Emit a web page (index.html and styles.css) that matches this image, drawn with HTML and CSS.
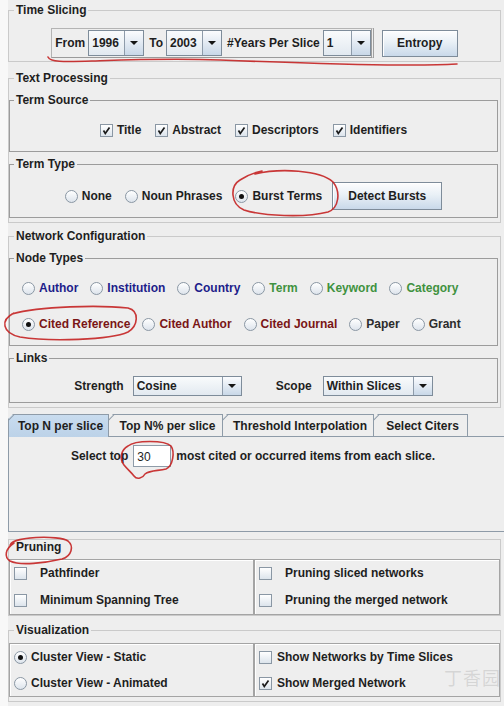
FILE: index.html
```html
<!DOCTYPE html>
<html lang="en">
<head>
<meta charset="utf-8">
<title>Settings</title>
<link rel="stylesheet" href="styles.css">
</head>
<body>
<div class="app">
  <fieldset class="outer ts">
    <legend>Time Slicing</legend>
    <div class="ts-row">
      <div class="toolbar">
        <span class="lbl">From</span>
        <div class="combo c-year"><span class="val">1996</span><span class="arr"><svg width="8" height="4" viewBox="0 0 8 4"><path d="M0 0H8L4 4Z"/></svg></span></div>
        <span class="lbl">To</span>
        <div class="combo c-year"><span class="val">2003</span><span class="arr"><svg width="8" height="4" viewBox="0 0 8 4"><path d="M0 0H8L4 4Z"/></svg></span></div>
        <span class="lbl">#Years Per Slice</span>
        <div class="combo c-per"><span class="val">1</span><span class="arr"><svg width="8" height="4" viewBox="0 0 8 4"><path d="M0 0H8L4 4Z"/></svg></span></div>
      </div>
      <div class="btn b-entropy">Entropy</div>
    </div>
  </fieldset>

  <fieldset class="outer tp">
    <legend>Text Processing</legend>
    <fieldset class="inner src">
      <legend>Term Source</legend>
      <div class="row center src-row">
        <span class="item"><span class="cb"><svg width="11" height="11" viewBox="0 0 11 11"><path d="M2.5 5.5 L4.3 8.5 L8.5 2.5"/></svg></span>Title</span>
        <span class="item"><span class="cb"><svg width="11" height="11" viewBox="0 0 11 11"><path d="M2.5 5.5 L4.3 8.5 L8.5 2.5"/></svg></span>Abstract</span>
        <span class="item"><span class="cb"><svg width="11" height="11" viewBox="0 0 11 11"><path d="M2.5 5.5 L4.3 8.5 L8.5 2.5"/></svg></span>Descriptors</span>
        <span class="item"><span class="cb"><svg width="11" height="11" viewBox="0 0 11 11"><path d="M2.5 5.5 L4.3 8.5 L8.5 2.5"/></svg></span>Identifiers</span>
      </div>
    </fieldset>
    <fieldset class="inner ttype">
      <legend>Term Type</legend>
      <div class="row center ttype-row">
        <span class="item"><span class="rb"></span>None</span>
        <span class="item"><span class="rb"></span>Noun Phrases</span>
        <span class="item"><span class="rb on"></span>Burst Terms</span>
        <div class="btn b-detect">Detect Bursts</div>
      </div>
    </fieldset>
  </fieldset>

  <fieldset class="outer nc">
    <legend>Network Configuration</legend>
    <fieldset class="inner nodes">
      <legend>Node Types</legend>
      <div class="row nrow">
        <span class="item blue"><span class="rb"></span>Author</span>
        <span class="item blue"><span class="rb"></span>Institution</span>
        <span class="item blue"><span class="rb"></span>Country</span>
        <span class="item green"><span class="rb"></span>Term</span>
        <span class="item green"><span class="rb"></span>Keyword</span>
        <span class="item green"><span class="rb"></span>Category</span>
      </div>
      <div class="row nrow">
        <span class="item red"><span class="rb on"></span>Cited Reference</span>
        <span class="item red"><span class="rb"></span>Cited Author</span>
        <span class="item red"><span class="rb"></span>Cited Journal</span>
        <span class="item gray"><span class="rb"></span>Paper</span>
        <span class="item gray"><span class="rb"></span>Grant</span>
      </div>
    </fieldset>
    <fieldset class="inner links">
      <legend>Links</legend>
      <div class="row center links-row">
        <span class="lbl l-strength">Strength</span>
        <div class="combo c-strength"><span class="val">Cosine</span><span class="arr"><svg width="8" height="4" viewBox="0 0 8 4"><path d="M0 0H8L4 4Z"/></svg></span></div>
        <span class="lbl l-scope">Scope</span>
        <div class="combo c-scope"><span class="val">Within Slices</span><span class="arr"><svg width="8" height="4" viewBox="0 0 8 4"><path d="M0 0H8L4 4Z"/></svg></span></div>
      </div>
    </fieldset>
  </fieldset>

  <div class="tabpane">
    <div class="tabs">
      <div class="tab sel t1">Top N per slice</div>
      <div class="tab t2">Top N% per slice</div>
      <div class="tab t3">Threshold Interpolation</div>
      <div class="tab t4">Select Citers</div>
    </div>
    <div class="tabbody">
      <span>Select top</span>
      <span class="field">30</span>
      <span>most cited or occurred items from each slice.</span>
    </div>
  </div>

  <div class="pruning">
    <div class="ptitle">Pruning</div>
    <div class="split">
      <div class="cell">
        <div class="prow"><span class="cb"></span><span class="ptext">Pathfinder</span></div>
        <div class="prow"><span class="cb"></span><span class="ptext">Minimum Spanning Tree</span></div>
      </div>
      <div class="cell">
        <div class="prow"><span class="cb"></span><span class="ptext">Pruning sliced networks</span></div>
        <div class="prow"><span class="cb"></span><span class="ptext">Pruning the merged network</span></div>
      </div>
    </div>
  </div>

  <fieldset class="outer vis">
    <legend>Visualization</legend>
    <div class="split vsplit">
      <div class="cell">
        <div class="vrow"><span class="rb on"></span>Cluster View - Static</div>
        <div class="vrow"><span class="rb"></span>Cluster View - Animated</div>
      </div>
      <div class="cell">
        <div class="vrow"><span class="cb"></span>Show Networks by Time Slices</div>
        <div class="vrow"><span class="cb"><svg width="11" height="11" viewBox="0 0 11 11"><path d="M2.5 5.5 L4.3 8.5 L8.5 2.5"/></svg></span>Show Merged Network</div>
      </div>
    </div>
  </fieldset>
</div>

<div class="wm">丁香园</div>

<svg class="ink" width="504" height="706" viewBox="0 0 504 706">
  <path d="M48 57 C50 62, 62 62, 92 61 S170 58, 220 60 S350 65, 400 65 S450 64, 457 64"/>
  <path d="M255 174 C280 168, 320 170, 333 182 C341 192, 339 208, 328 212 C305 218, 262 216, 244 210 C230 204, 230 186, 240 180 C246 176, 252 173, 262 171"/>
  <path d="M12 314 C40 306, 100 305, 128 308 C140 311, 138 326, 128 332 C110 340, 50 342, 20 337 C2 333, 0 320, 14 313"/>
  <path d="M128 446 C135 440, 165 440, 171 446 C175 452, 173 466, 166 469 C158 471, 150 470, 145 474 C143 478, 137 480, 134 476 C131 472, 128 470, 124 465 C119 458, 121 450, 128 446"/>
  <path d="M10 546 C10 536, 60 535, 68 541 C74 546, 72 556, 62 559 C45 563, 20 566, 10 561 C4 557, 5 549, 14 543"/>
</svg>
</body>
</html>
```

FILE: styles.css
```css
* { box-sizing: border-box; }

html, body {
  margin: 0;
  padding: 0;
  overflow: hidden;
}

body {
  position: relative;
  width: 504px;
  height: 706px;
  background: #f8f8f8;
  font: bold 12px/14px "Liberation Sans", Arial, sans-serif;
  color: #1e1e1e;
}

.app {
  margin-left: 8px;
  width: 496px;
  height: 706px;
  background: #eeeeee;
  padding-top: 3px;
}

fieldset {
  margin: 0;
  padding: 0;
  min-width: 0;
}

legend {
  padding: 0 2px;
  line-height: 14px;
}

.outer {
  width: 493px;
  border: 1px solid #cacaca;
}
.outer > legend { margin-left: 5px; }

.inner {
  margin-right: 2px;
  border: 1px solid #9c9c9c;
}
.inner > legend { margin-left: 4px; }

.row { display: flex; align-items: center; }
.center { justify-content: center; }

.item {
  display: flex;
  align-items: center;
  gap: 4px;
  height: 20px;
}

/* radio & checkbox */
.rb {
  position: relative;
  flex: none;
  width: 13px;
  height: 13px;
  border-radius: 50%;
  border: 1px solid #8a97a4;
  background: linear-gradient(#ffffff, #dde4ec);
}
.rb.on::after {
  content: "";
  position: absolute;
  left: 3px;
  top: 3px;
  width: 5px;
  height: 5px;
  border-radius: 50%;
  background: #111;
}
.cb {
  flex: none;
  width: 13px;
  height: 13px;
  border: 1px solid #8a97a4;
  background: linear-gradient(#ffffff, #dce4ec);
  display: flex;
}
.cb svg path {
  fill: none;
  stroke: #1a1a1a;
  stroke-width: 1.7;
}

/* combo + button */
.combo {
  flex: none;
  display: flex;
  border: 1px solid #7e8c9a;
  background: linear-gradient(#f9fbfc, #e2e9f0);
}
.combo .val {
  flex: 1;
  display: flex;
  align-items: center;
  padding-left: 3px;
}
.combo .arr {
  width: 19px;
  border-left: 1px solid #8e9baa;
  display: flex;
  align-items: center;
  justify-content: center;
  background: linear-gradient(#fbfcfe, #c9d8e8);
}
.combo .arr svg path { fill: #151515; }

.btn {
  flex: none;
  display: flex;
  align-items: center;
  justify-content: center;
  border: 1px solid #7e8c9a;
  background: linear-gradient(#fdfdfe 0%, #e9f0f6 45%, #c9d9ea 100%);
  box-shadow: inset 1px 1px 0 #ffffff;
}

/* time slicing */
.ts-row {
  display: flex;
  justify-content: center;
  align-items: center;
  gap: 8px;
  padding: 11px 0 3px;
}
.toolbar {
  display: flex;
  align-items: center;
  height: 30px;
  padding-left: 3px;
  border: 1px solid #b4b4b4;
  border-bottom-color: #9a9a9a;
  border-right: 3px double #a0a0a0;
}
.toolbar .lbl { margin-right: 3px; }
.toolbar .combo { height: 26px; margin-right: 5px; }
.toolbar .combo:last-child { margin-right: 0; }
.c-year { width: 56px; }
.c-per { width: 48px; }
.b-entropy { width: 76px; height: 27px; }

/* text processing */
.tp { margin-top: 9px; padding-bottom: 4px; }
.src { margin-top: 8px; }
.src-row { gap: 14px; padding: 13px 0 11px; }
.ttype { margin-top: 5px; }
.ttype-row { gap: 13px; padding: 11px 0 7px; }
.b-detect { width: 110px; height: 28px; margin-left: -3px; }

/* network configuration */
.nc { margin-top: 6px; padding-bottom: 4px; }
.nodes { margin-top: 8px; padding: 13px 0 11px 0; }
.nrow { gap: 12px; padding-left: 12px; }
.nrow + .nrow { margin-top: 16px; }
.blue { color: #1d1d8a; }
.green { color: #3f923f; }
.red { color: #7a1515; }
.gray { color: #2c2c2c; }

.links { margin-top: 5px; }
.links-row { padding: 11px 0 6px; }
.links-row .combo { height: 20px; }
.l-strength { margin-right: 9px; }
.c-strength { width: 109px; }
.l-scope { margin-left: 34px; margin-right: 11px; }
.c-scope { width: 110px; }

/* tabs */
.tabpane { margin-top: 6px; width: 496px; }
.tabs { display: flex; height: 22px; }
.tab {
  position: relative;
  height: 22px;
  margin-right: -1px;
  padding-left: 4px;
  display: flex;
  align-items: center;
  justify-content: center;
  border: 1px solid #8e9ba8;
  border-bottom: none;
  clip-path: polygon(5px 0, 100% 0, 100% 100%, 0 100%, 0 5px);
}
.tab::before {
  content: "";
  position: absolute;
  left: -1px;
  top: 5px;
  width: 9px;
  height: 1px;
  background: #8e9ba8;
  transform-origin: 0 0;
  transform: rotate(-45deg);
}
.tab.sel {
  z-index: 2;
  height: 23px;
  margin-bottom: -1px;
  background: linear-gradient(#c9dcef, #bcd2e8);
}
.t1 { width: 101px; }
.t2 { width: 115px; }
.t3 { width: 152px; }
.t4 { width: 95px; }

.tabbody {
  height: 96px;
  border: 1px solid #8e9ba8;
  border-right: none;
  padding: 8px 7px 0 0;
  display: flex;
  justify-content: center;
  align-items: flex-start;
  gap: 5px;
}
.tabbody > span { line-height: 22px; }
.tabbody .field {
  width: 38px;
  height: 22px;
  padding-left: 3px;
  border: 1px solid #8e9ba8;
  background: #ffffff;
  font-weight: normal;
}

/* pruning */
.pruning {
  margin-top: 7px;
  width: 493px;
  border: 1px solid #cacaca;
}
.ptitle {
  height: 19px;
  padding-left: 7px;
}
.split {
  display: grid;
  grid-template-columns: 245px 1fr;
}
.cell {
  border: 1px solid #a4a4a4;
  box-shadow: inset 1px 1px 0 #ffffff;
  padding: 3px 0 4px 4px;
}
.prow {
  display: flex;
  align-items: center;
  gap: 13px;
  height: 20px;
}
.prow + .prow { margin-top: 7px; }

/* visualization */
.vis { margin-top: 7px; padding-bottom: 4px; }
.vsplit { margin-top: 6px; }
.vsplit .cell { padding: 3px 0 3px 4px; }
.vrow {
  display: flex;
  align-items: center;
  gap: 4px;
  height: 20px;
}
.vrow + .vrow { margin-top: 6px; }
.vsplit .cell + .cell .vrow { gap: 5px; }

/* overlays */
.wm {
  position: absolute;
  left: 444px;
  top: 666px;
  white-space: nowrap;
  font: normal 18px/22px "Noto Sans CJK SC", sans-serif;
  color: rgba(150, 150, 150, 0.28);
  letter-spacing: 1px;
}

.ink {
  position: absolute;
  left: 0;
  top: 0;
  pointer-events: none;
}
.ink path {
  fill: none;
  stroke: #c42222;
  stroke-width: 1.6;
  stroke-linecap: round;
  opacity: 0.9;
}
```
